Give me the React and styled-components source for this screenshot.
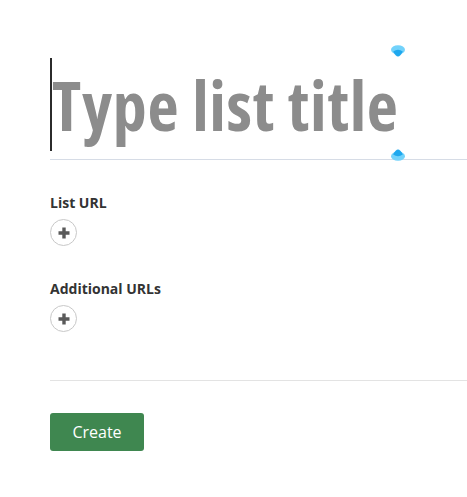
import React from "react";
import styled, { createGlobalStyle } from "styled-components";

const Global = createGlobalStyle`
  html, body { margin: 0; padding: 0; background: #fff; }
  body { font-family: "Open Sans", "Liberation Sans", sans-serif; }
`;

const Page = styled.div`
  padding: 58px 0 40px 50px;
  display: flex;
  flex-direction: column;
`;

const TitleField = styled.div`
  position: relative;
  padding: 0 0 8px 0;
  border-bottom: 1px solid #d6dce6;
`;

const TitleText = styled.div`
  font-family: "Open Sans", sans-serif;
  font-stretch: 75%;
  font-weight: 700;
  font-size: 68px;
  line-height: 93px;
  height: 93px;
  color: #8c8c8c;
  padding-left: 2px;
  letter-spacing: 0.7px;
  white-space: nowrap;
`;

const Caret = styled.span`
  position: absolute;
  left: 0;
  top: 0;
  width: 2px;
  height: 93px;
  background: #2b2b2b;
`;

const Handle = styled.svg`
  position: absolute;
  left: 341px;
  top: ${(p) => p.$top}px;
  width: 14px;
  height: 12px;
`;

const Section = styled.div`
  display: flex;
  flex-direction: column;
  align-items: flex-start;
  gap: 6px;
  margin-top: ${(p) => p.$mt}px;
`;

const Label = styled.div`
  font-size: 14px;
  line-height: 20px;
  font-weight: 700;
  color: #333;
`;

const AddButton = styled.button`
  width: 27px;
  height: 27px;
  border-radius: 50%;
  border: 1px solid #c8c8c8;
  background: #fff;
  display: flex;
  align-items: center;
  justify-content: center;
  padding: 0;
`;

const Divider = styled.div`
  height: 1px;
  background: #e3e3e3;
  margin-top: 48px;
`;

const CreateButton = styled.button`
  align-self: flex-start;
  margin-top: 32px;
  width: 94px;
  height: 38px;
  border: none;
  border-radius: 3px;
  background: #3f8750;
  color: #fff;
  font-family: "Open Sans", sans-serif;
  font-size: 16px;
`;

const Plus = () => (
  <svg width="12" height="12" viewBox="0 0 12 12">
    <path d="M6 0.5v11M0.5 6h11" stroke="#5a5a5a" strokeWidth="3.4" strokeLinecap="butt" />
  </svg>
);

const HandleShape = ({ top, flip }) => (
  <Handle $top={top} viewBox="0 0 14 12">
    <g transform={flip ? "rotate(180 7 6)" : undefined}>
      <ellipse cx="7" cy="4.8" rx="7" ry="4.6" fill="#72d2fb" />
      <path d="M2.2 6.4 Q7 3.2 11.8 6.4 Q9.3 11.5 7 11.5 Q4.7 11.5 2.2 6.4 Z" fill="#1fa8ee" />
    </g>
  </Handle>
);

export default function App() {
  return (
    <>
      <Global />
      <Page>
        <TitleField>
          <Caret />
          <TitleText>Type list title</TitleText>
          <HandleShape top={-13} />
          <HandleShape top={91} flip />
        </TitleField>
        <Section $mt={33}>
          <Label>List URL</Label>
          <AddButton aria-label="Add list URL"><Plus /></AddButton>
        </Section>
        <Section $mt={33}>
          <Label>Additional URLs</Label>
          <AddButton aria-label="Add additional URL"><Plus /></AddButton>
        </Section>
        <Divider />
        <CreateButton>Create</CreateButton>
      </Page>
    </>
  );
}
